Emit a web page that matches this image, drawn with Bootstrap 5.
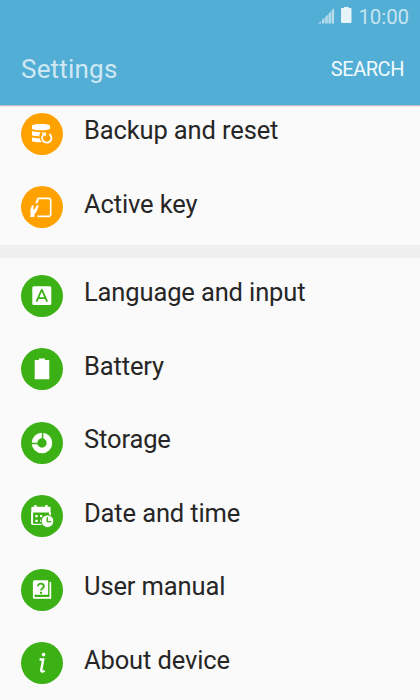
<!DOCTYPE html>
<html lang="en">
<head>
<meta charset="utf-8">
<meta name="viewport" content="width=device-width, initial-scale=1">
<title>Settings</title>
<link href="https://cdn.jsdelivr.net/npm/bootstrap@5.3.0/dist/css/bootstrap.min.css" rel="stylesheet">
<style>
body { font-family: Roboto, sans-serif; background: #fafafa; color: #262626; height: 700px; }
.app-header { height: 105px; background: #52aed4; z-index: 2; box-shadow: 0 1px 1px rgba(0,0,0,.25); flex: none; }
.status-bar { height: 33px; padding-right: 11px; color: #c6e4f1; }
.clock { font-size: 20.5px; line-height: 33px; letter-spacing: -.1px; padding-top: 1px; }
.title-bar { height: 72px; padding: 0 16px 0 21px; }
.app-title { font-size: 26px; line-height: 72px; letter-spacing: .2px; color: #cfe8f3; }
.search-btn { font-size: 20px; line-height: 72px; letter-spacing: -.45px; color: #f2fafd; }
.settings-group { flex: none; }
.settings-group .list-group-item { height: 73.5px; padding: 0 21px; border: 0; background: transparent; color: inherit; }
.first-group { margin-top: -8px; height: 148px; }
.second-group { padding-top: 1px; }
.divider { height: 13px; background: #efefef; flex: none; }
.round-icon { width: 42px; height: 42px; flex: none; }
.orange { color: #ffa200; }
.green { color: #3cb116; }
.item-label { font-size: 25.5px; letter-spacing: -.13px; line-height: 30px; margin: 0 0 7px 21px; }
</style>
</head>
<body class="overflow-hidden d-flex flex-column">
<header class="app-header position-relative">
  <div class="status-bar d-flex justify-content-end align-items-center">
    <svg width="36" height="33" viewBox="0 0 36 33" class="me-1">
      <path fill="#b5dceb" d="M0 23.500L3 21.200v2.300zM4 23.500V19.800l2.500-2v5.700zM7.200 23.500V17l2.600-2.400v8.900zM10.400 23.500V13.700l2.500-2.300v12.100zM13.500 23.500V10.500l2.600-2.300v15.300z"/>
      <path fill="#e6f4fa" d="M23 9q0-1 1-1h1.800V7h5V8h1.700q1 0 1 1v13q0 1-1 1H24q-1 0-1-1z"/>
    </svg>
    <span class="clock">10:00</span>
  </div>
  <div class="title-bar d-flex justify-content-between">
    <h1 class="app-title fw-normal m-0">Settings</h1>
    <a class="search-btn text-decoration-none" href="#">SEARCH</a>
  </div>
</header>
<main class="d-flex flex-column">
  <div class="settings-group first-group list-group list-group-flush">
    <div class="list-group-item d-flex align-items-center">
      <svg class="round-icon orange" viewBox="0 0 42 42"><circle cx="21" cy="21" r="21" fill="currentColor"/>
        <path fill="#fff" d="M11 12.800c0-1.200 4-1.800 9-1.800s9 .6 9 1.800v2.600c0 1.200-4 1.800-9 1.800s-9-.6-9-1.800zM11 18c2 .8 5 1 8.600 1-.8 1.200-1.200 2.600-1.200 4.400-3.800 0-7.400-.4-7.400-1.600zM11 24.200c2 .7 4.600 1 7.600 1 .4 1.600 1.200 3 2.400 4.100-5 .2-10-.3-10-1.500z"/>
        <path fill="none" stroke="#fff" stroke-width="1.800" d="M23.300 20.900a4.700 4.700 0 1 0 5 .1"/>
        <path fill="#fff" d="M20.300 19.500h4.600v4.200z"/></svg>
      <span class="item-label">Backup and reset</span>
    </div>
    <div class="list-group-item d-flex align-items-center">
      <svg class="round-icon orange" viewBox="0 0 42 42"><circle cx="21" cy="21" r="21" fill="currentColor"/>
        <path fill="none" stroke="#fff" stroke-width="1.700" stroke-linejoin="round" d="M16 13.500l1.800-1.200h10.600l1.300 1.400v15.200l-1.300 1.500H16.500"/>
        <path fill="#fff" d="M9 31l.7-3c-.7-2-.4-4.500.3-6l.9-2.600q1.500-.7 1.700.7l-.3 3.300.9.300 2.600-4.300q1.600-.8 1.900.6l-1.300 3.300c-.5 2-1.200 3.300-2.700 4.500L13.200 31zM14.200 17l1.600-3.600q1.900-.7 2 .9l-1.700 3.300z"/></svg>
      <span class="item-label">Active key</span>
    </div>
  </div>
  <div class="divider"></div>
  <div class="settings-group list-group list-group-flush second-group">
    <div class="list-group-item d-flex align-items-center">
      <svg class="round-icon green" viewBox="0 0 42 42"><circle cx="21" cy="21" r="21" fill="currentColor"/>
        <rect x="11.300" y="11.300" width="19" height="18.700" rx="1.500" fill="#fff"/>
        <path fill="none" stroke="currentColor" stroke-width="1.800" d="M15.500 26.700L20.500 15.200h.6L26.100 26.700M17.300 23.200h7"/></svg>
      <span class="item-label">Language and input</span>
    </div>
    <div class="list-group-item d-flex align-items-center">
      <svg class="round-icon green" viewBox="0 0 42 42"><circle cx="21" cy="21" r="21" fill="currentColor"/>
        <path fill="#fff" d="M13.700 12h4.200v-1.400h6V12h4.400v19.200H13.700z"/></svg>
      <span class="item-label">Battery</span>
    </div>
    <div class="list-group-item d-flex align-items-center">
      <svg class="round-icon green" viewBox="0 0 42 42"><circle cx="21" cy="21" r="21" fill="currentColor"/>
        <circle cx="21" cy="21" r="7.500" fill="none" stroke="#fff" stroke-width="5.600"/>
        <path fill="none" stroke="currentColor" stroke-width="1.500" d="M21.600 10v7M10 21.500h7"/></svg>
      <span class="item-label">Storage</span>
    </div>
    <div class="list-group-item d-flex align-items-center">
      <svg class="round-icon green" viewBox="0 0 42 42"><circle cx="21" cy="21" r="21" fill="currentColor"/>
        <path fill="#fff" d="M10.300 13q0-1.300 1.300-1.300h1.700V10h2.300v1.700h8.700V10h2.300v1.700h1.700q1.300 0 1.300 1.300v17H11.600q-1.300 0-1.300-1.300z"/>
        <path fill="currentColor" d="M12 17.500h16v11.300H12z"/>
        <path fill="#fff" d="M10.300 17h1.800v12H10.300zM28 17h1.600v5H28zM14.400 20h2.300v2.300h-2.300zM19 20h2.300v2.300H19zM14.400 24.700h2.300V27h-2.300zM19 24.700h2.300V27H19z"/>
        <circle cx="26.500" cy="26.200" r="6.300" fill="#fff" stroke="currentColor" stroke-width="1"/>
        <path fill="none" stroke="currentColor" stroke-width="1.400" d="M26.300 22.300v4.300h4"/></svg>
      <span class="item-label">Date and time</span>
    </div>
    <div class="list-group-item d-flex align-items-center">
      <svg class="round-icon green" viewBox="0 0 42 42"><circle cx="21" cy="21" r="21" fill="currentColor"/>
        <path fill="#fff" d="M13.500 11.200h13.600v14.500H14.200q-.8 0-.8 1.200t.8 1.200h14.300V13h1.700v16.800H13.200q-1.300 0-1.300-1.500V12.700q0-1.500 1.600-1.500z"/>
        <path fill="none" stroke="currentColor" stroke-width="1.900" d="M17 17.200c0-3.500 5.800-3.300 5.800 0 0 2-2.700 2-2.700 4.400"/>
        <path fill="currentColor" d="M19 22.800h2.100v2H19z"/></svg>
      <span class="item-label">User manual</span>
    </div>
    <div class="list-group-item d-flex align-items-center">
      <svg class="round-icon green" viewBox="0 0 42 42"><circle cx="21" cy="21" r="21" fill="currentColor"/>
        <circle cx="22.600" cy="12.600" r="1.800" fill="#fff"/>
        <path fill="none" stroke="#fff" stroke-width="2.400" d="M18.600 17.500h3.600l-1.900 10.200q-.4 2.100 1.200 1.900 1.200-.1 2-.9"/></svg>
      <span class="item-label">About device</span>
    </div>
  </div>
</main>
<script src="https://cdn.jsdelivr.net/npm/bootstrap@5.3.0/dist/js/bootstrap.bundle.min.js"></script>
</body>
</html>
